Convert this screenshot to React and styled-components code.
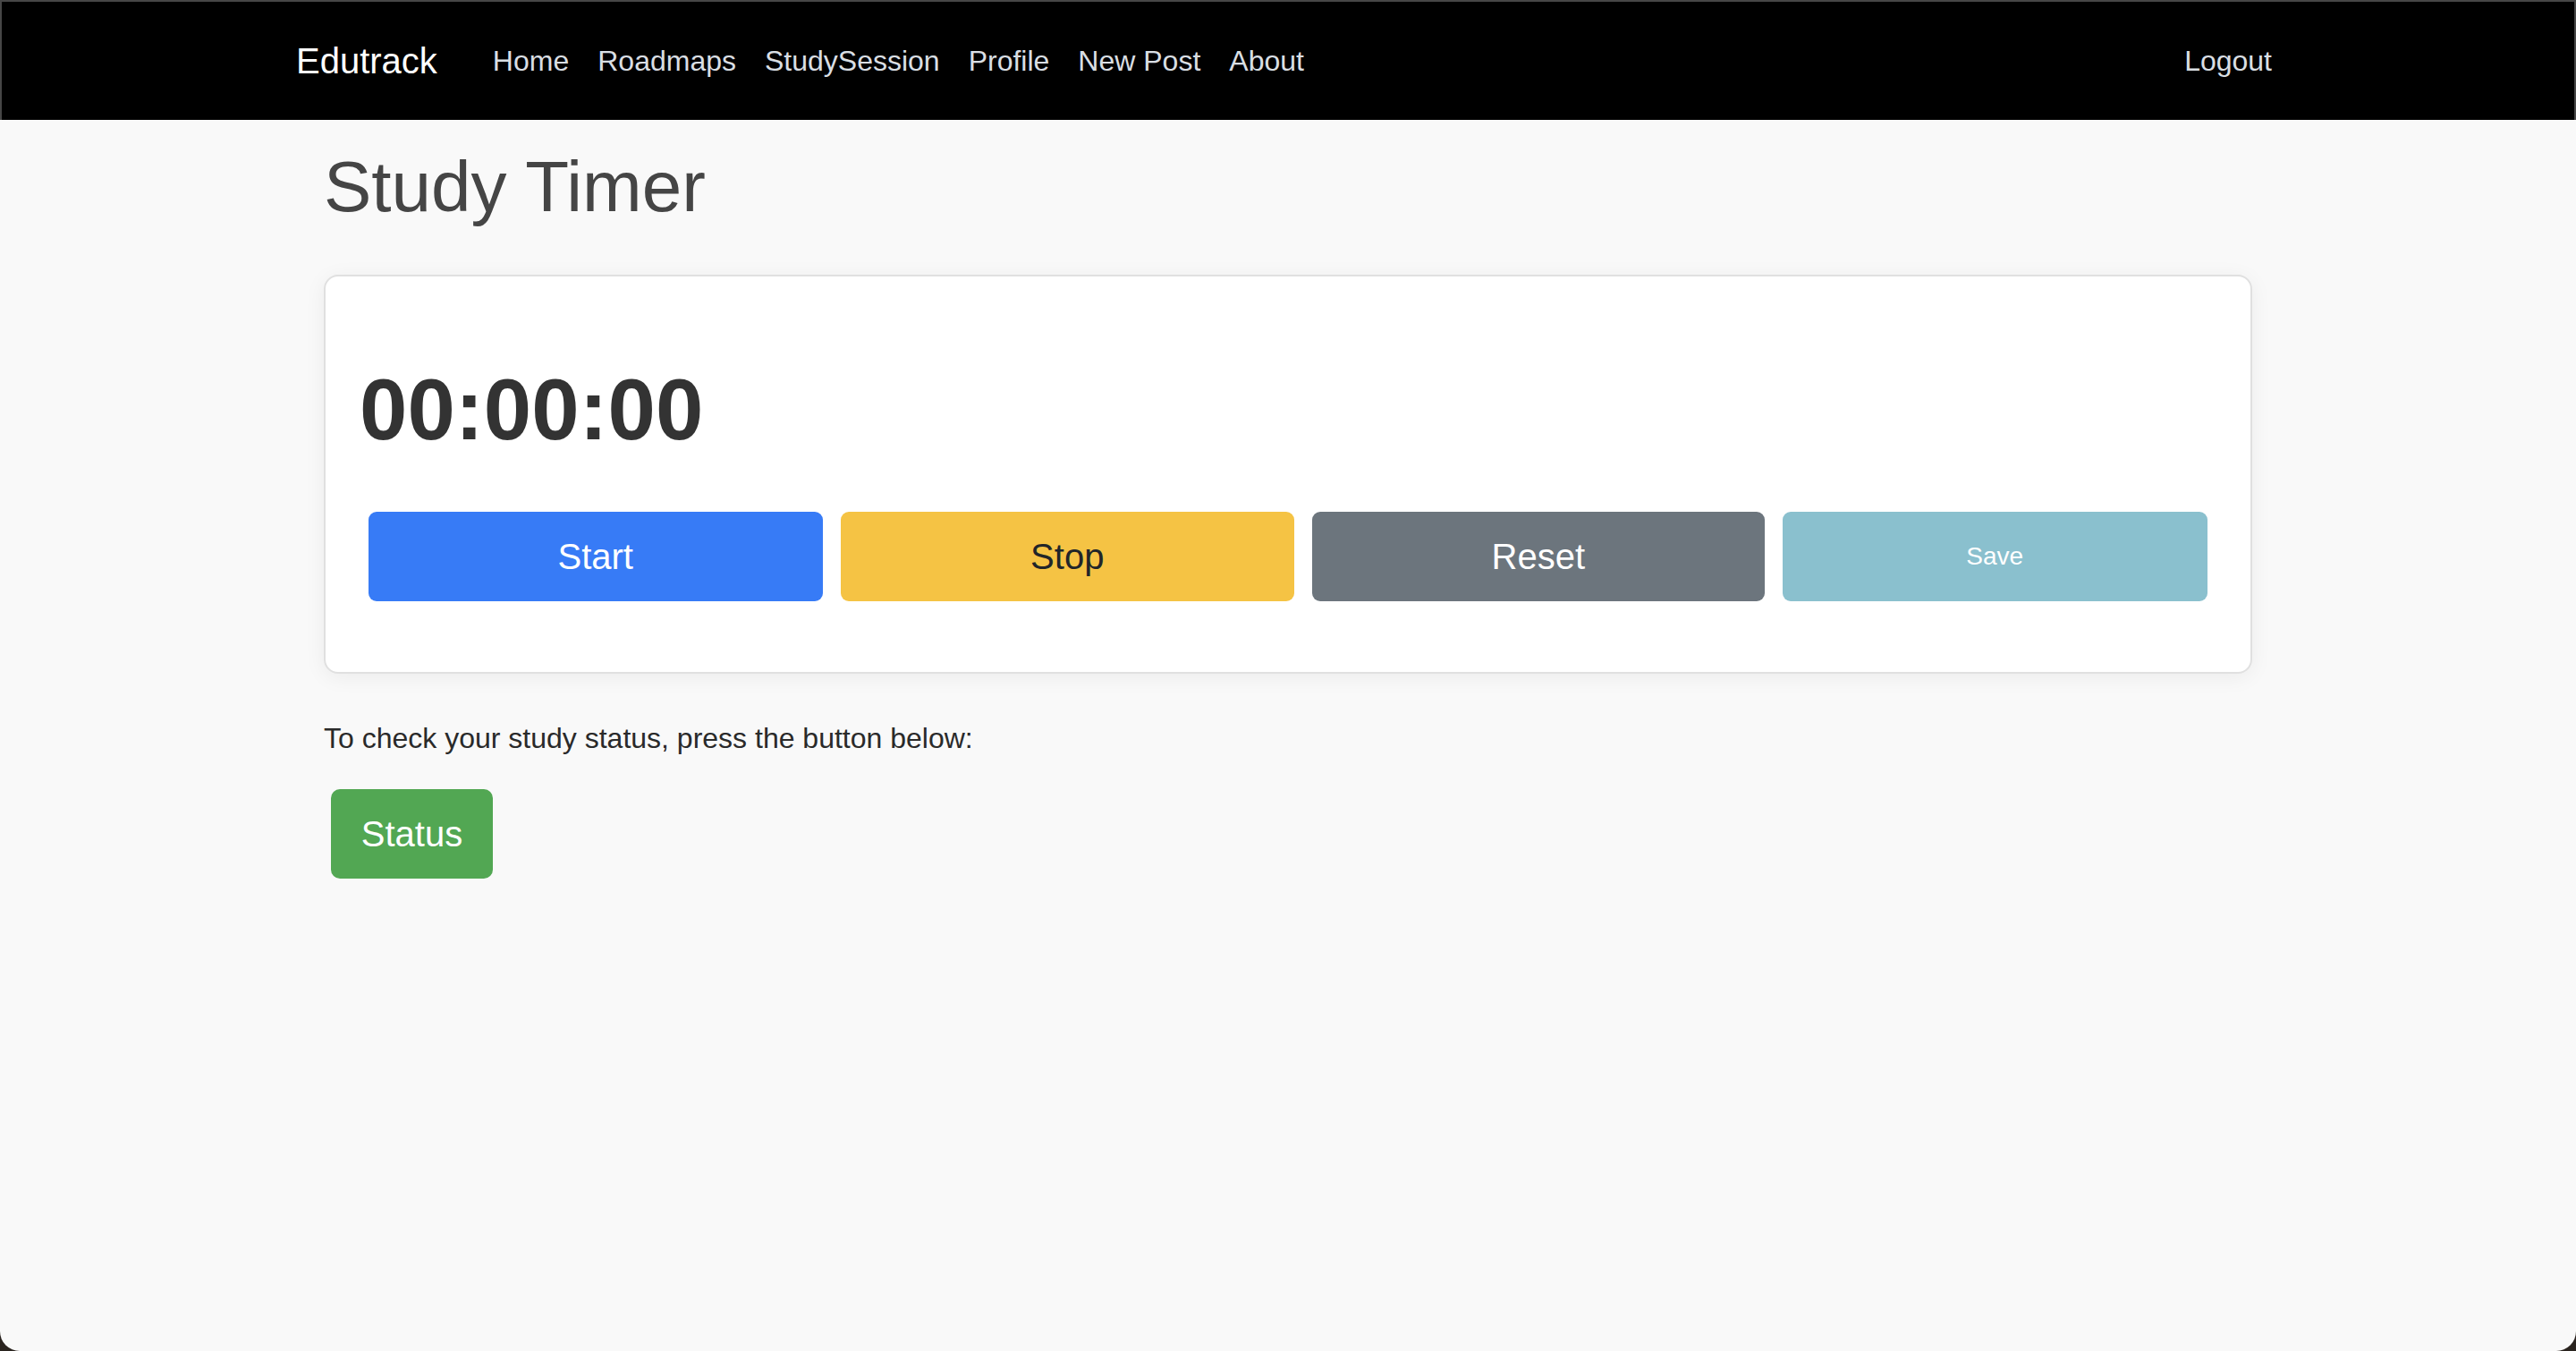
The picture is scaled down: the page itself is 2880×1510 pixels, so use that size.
import React from "react";
import styled, { createGlobalStyle } from "styled-components";

const Global = createGlobalStyle`
  html, body { margin: 0; padding: 0; background: #2a241f; }
  body { font-family: "Liberation Sans", Arial, Helvetica, sans-serif; }
  * { box-sizing: border-box; }
`;

const Page = styled.div`
  min-height: 1510px;
  background: #f9f9f9;
  border-radius: 0 0 22px 22px;
  overflow: hidden;
`;

const NavBar = styled.nav`
  height: 134px;
  background: #000;
  border: 2px solid #464646;
  border-bottom: none;
`;

const NavInner = styled.div`
  width: 2280px;
  margin: 0 auto;
  padding: 0 24px 0 31px;
  height: 100%;
  display: flex;
  align-items: center;
`;

const Brand = styled.a`
  font-size: 40px;
  color: #fff;
  text-decoration: none;
  margin-right: 46px;
  line-height: 60px;
`;

const NavList = styled.div`
  display: flex;
  align-items: center;
  flex: 1;
`;

const NavLink = styled.a`
  font-size: 32px;
  color: #d9dee3;
  text-decoration: none;
  padding: 0 16px;
  line-height: 48px;
  ${(p) => p.$right && "margin-left: auto;"}
`;

const Main = styled.main`
  width: 2156px;
  margin: 0 auto;
`;

const Title = styled.h1`
  margin: 27px 0 50px;
  font-size: 80px;
  line-height: 96px;
  font-weight: 400;
  color: #454545;
`;

const Card = styled.section`
  background: #fff;
  border: 2px solid #e0e0e0;
  border-radius: 16px;
  padding: 38px;
  box-shadow: 0 4px 24px rgba(0, 0, 0, 0.06);
`;

const Timer = styled.div`
  margin: 53px 0 0;
  font-size: 96px;
  line-height: 115px;
  font-weight: 700;
  color: #333;
`;

const ButtonRow = styled.div`
  display: grid;
  grid-template-columns: 507fr 507fr 505fr 475fr;
  column-gap: 20px;
  margin: 57px 10px 41px;
`;

const Btn = styled.button`
  height: 100px;
  border: none;
  border-radius: 9px;
  font-family: inherit;
  font-size: ${(p) => (p.$small ? "28px" : "40px")};
  background: ${(p) => p.$bg};
  color: ${(p) => p.$fg || "#fff"};
  cursor: pointer;
  padding: 0;
`;

const Note = styled.p`
  margin: 48px 0 33px;
  font-size: 32px;
  line-height: 48px;
  color: #2a2a2a;
`;

const StatusBtn = styled.button`
  margin-left: 8px;
  height: 100px;
  width: 181px;
  border: none;
  border-radius: 10px;
  background: #52a753;
  color: #fff;
  font-family: inherit;
  font-size: 40px;
  padding: 0;
  cursor: pointer;
`;

export default function App() {
  const links = ["Home", "Roadmaps", "StudySession", "Profile", "New Post", "About"];
  return (
    <>
      <Global />
      <Page>
        <NavBar>
          <NavInner>
            <Brand href="#">Edutrack</Brand>
            <NavList>
              {links.map((l) => (
                <NavLink key={l} href="#">{l}</NavLink>
              ))}
              <NavLink $right href="#">Logout</NavLink>
            </NavList>
          </NavInner>
        </NavBar>
        <Main>
          <Title>Study Timer</Title>
          <Card>
            <Timer>00:00:00</Timer>
            <ButtonRow>
              <Btn $bg="#377bf6">Start</Btn>
              <Btn $bg="#f5c344" $fg="#212529">Stop</Btn>
              <Btn $bg="#6c757d">Reset</Btn>
              <Btn $bg="#8ac0ce" $small>Save</Btn>
            </ButtonRow>
          </Card>
          <Note>To check your study status, press the button below:</Note>
          <StatusBtn>Status</StatusBtn>
        </Main>
      </Page>
    </>
  );
}
